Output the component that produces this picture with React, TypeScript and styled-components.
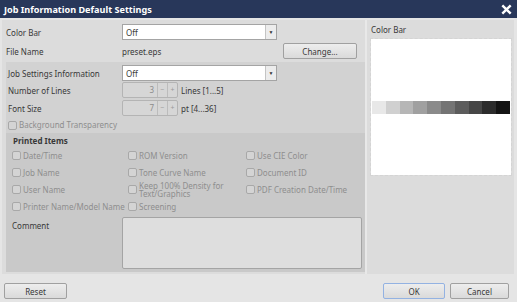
import React from 'react'
import styled, { createGlobalStyle } from 'styled-components'

const GlobalStyle = createGlobalStyle`
  html, body { margin: 0; padding: 0; }
  body {
    font-family: "Noto Sans", "Open Sans", sans-serif;
    font-size: 8px;
    color: #383838;
    background: #e5e5e5;
  }
`

const Window = styled.div`
  width: 517px;
  height: 302px;
  display: flex;
  flex-direction: column;
  background: #e5e5e5;
  overflow: hidden;
`

const TitleBar = styled.div`
  height: 18px;
  flex: none;
  background: #28375a;
  color: #fff;
  display: flex;
  align-items: center;
  justify-content: space-between;
  padding: 0 5px 0 4px;
  font-weight: bold;
  font-size: 9.1px;
`

const Body = styled.div`
  height: 258px;
  flex: none;
  box-sizing: border-box;
  display: flex;
  padding: 2px 3px 2px 2px;
`

const LeftPane = styled.div`
  width: 363px;
  flex: none;
  display: flex;
  flex-direction: column;
  background: #dcdcdc;
`

const RightPane = styled.div`
  flex: 1;
  background: #dcdcdc;
  border-left: 2px solid #e8e8e8;
  padding: 3px 2px 0 3px;
  display: flex;
  flex-direction: column;
`

const PaneLabel = styled.div`
  height: 13px;
  line-height: 13px;
  padding-left: 1px;
`

const TopBlock = styled.div`
  padding: 4px 0 3px 4px;
  display: flex;
  flex-direction: column;
  gap: 3px;
`

const Row = styled.div<{ $h?: number }>`
  display: flex;
  align-items: center;
  height: ${p => p.$h ?? 16}px;
`

const Label = styled.div<{ $w: number }>`
  width: ${p => p.$w}px;
  flex: none;
`

const Select = styled.div`
  width: 155px;
  height: 16px;
  box-sizing: border-box;
  border: 1px solid #a4a4a4;
  background: #fff;
  display: flex;
  align-items: stretch;
  padding-left: 3px;
  span { flex: 1; display: flex; align-items: center; }
`

const Arrow = styled.div`
  width: 10px;
  border-left: 1px solid #c4c4c4;
  background: #ececec;
  display: flex;
  align-items: center;
  justify-content: center;
  font-size: 5px;
  color: #333;
`

const FileName = styled.span`
  width: 161px;
  flex: none;
`

const Button = styled.div<{ $w: number; $focus?: boolean }>`
  width: ${p => p.$w}px;
  height: 16px;
  box-sizing: border-box;
  border: 1px solid ${p => (p.$focus ? '#93b2e2' : '#a0a0a0')};
  border-radius: 2px;
  background: linear-gradient(#ededed, #dadada);
  display: flex;
  align-items: center;
  justify-content: center;
  color: #383838;
`

const JobBlock = styled.div`
  flex: 1;
  margin: 0 0 2px 4px;
  background: #d2d2d2;
  display: flex;
  flex-direction: column;
  padding-top: 3px;
`

const JobRows = styled.div`
  padding-left: 2px;
  display: flex;
  flex-direction: column;
`

const Spinner = styled.div`
  display: flex;
  height: 16px;
  width: 56px;
  box-sizing: border-box;
  border: 1px solid #b4b4b4;
  border-radius: 2px;
  background: #d6d6d6;
  margin-right: 3px;
`

const SpinValue = styled.div`
  flex: 1;
  text-align: right;
  padding-right: 3px;
  color: #8c8c8c;
  line-height: 14px;
`

const SpinBtn = styled.div`
  width: 9px;
  border-left: 1px solid #bcbcbc;
  color: #9a9a9a;
  text-align: center;
  line-height: 14px;
  font-size: 7px;
`

const Check = styled.div`
  display: flex;
  align-items: center;
  gap: 2px;
  color: #8e8e8e;
  line-height: 8px;
  white-space: pre;
`

const Box = styled.div`
  width: 7px;
  height: 7px;
  flex: none;
  border: 1px solid #a8a8a8;
  border-radius: 2px;
  background: #d4d4d4;
`

const PrintedBlock = styled.div`
  flex: 1;
  background: #c9c9c9;
  display: flex;
  flex-direction: column;
  padding-top: 1px;
`

const Heading = styled.div`
  font-weight: bold;
  height: 13px;
  line-height: 13px;
  padding-left: 7px;
`

const Grid = styled.div`
  display: grid;
  grid-template-columns: 116px 118px 1fr;
  grid-auto-rows: 17px;
  align-items: center;
  padding-left: 6px;
`

const CommentRow = styled.div`
  display: flex;
  margin-top: 2px;
`

const CommentLabel = styled.div`
  width: 110px;
  flex: none;
  padding: 3px 0 0 6px;
`

const TextArea = styled.div`
  width: 240px;
  height: 52px;
  box-sizing: border-box;
  border: 1px solid #a4a4a4;
  border-radius: 2px;
  background: #dedede;
`

const PreviewBox = styled.div`
  margin-top: 2px;
  height: 138px;
  box-sizing: border-box;
  background: #fff;
  background-clip: padding-box;
  border: 1px dashed #d4d4d4;
  display: flex;
  flex-direction: column;
  justify-content: center;
  padding: 0 1px;
`

const Strip = styled.div`
  display: flex;
  height: 13px;
`

const Patch = styled.div<{ $c: string }>`
  flex: 1;
  background: ${p => p.$c};
`

const Footer = styled.div`
  flex: 1;
  display: flex;
  align-items: flex-start;
  justify-content: space-between;
  padding: 7px 8px 0 4px;
`

const FooterRight = styled.div`
  display: flex;
  gap: 5px;
`

const patches = ['#e8e8e8', '#d0d0d0', '#b6b6b6', '#a0a0a0', '#8a8a8a', '#747474', '#5c5c5c', '#464646', '#2c2c2c', '#141414']

const items = [
  'Date/Time', 'ROM Version', 'Use CIE Color',
  'Job Name', 'Tone Curve Name', 'Document ID',
  'User Name', 'Keep 100% Density for\nText/Graphics', 'PDF Creation Date/Time',
  'Printer Name/Model Name', 'Screening', '',
]

function Checkbox({ label }: { label: string }) {
  if (!label) return <div />
  return (
    <Check>
      <Box />
      <span>{label}</span>
    </Check>
  )
}

function Spin({ value, unit }: { value: number; unit: string }) {
  return (
    <>
      <Spinner>
        <SpinValue>{value}</SpinValue>
        <SpinBtn>−</SpinBtn>
        <SpinBtn>+</SpinBtn>
      </Spinner>
      <span>{unit}</span>
    </>
  )
}

export default function App() {
  return (
    <Window>
      <GlobalStyle />
      <TitleBar>
        <span>Job Information Default Settings</span>
        <svg width="11" height="11" viewBox="0 0 11 11">
          <path d="M1.3 1.3 L9.7 9.7 M9.7 1.3 L1.3 9.7" stroke="#fff" strokeWidth="2.4" />
        </svg>
      </TitleBar>
      <Body>
        <LeftPane>
          <TopBlock>
            <Row>
              <Label $w={116}>Color Bar</Label>
              <Select><span>Off</span><Arrow>▼</Arrow></Select>
            </Row>
            <Row>
              <Label $w={116}>File Name</Label>
              <FileName>preset.eps</FileName>
              <Button $w={74}>Change...</Button>
            </Row>
          </TopBlock>
          <JobBlock>
            <JobRows>
              <Row>
                <Label $w={114}>Job Settings Information</Label>
                <Select><span>Off</span><Arrow>▼</Arrow></Select>
              </Row>
              <Row $h={18}>
                <Label $w={114}>Number of Lines</Label>
                <Spin value={3} unit="Lines [1...5]" />
              </Row>
              <Row $h={18}>
                <Label $w={114}>Font Size</Label>
                <Spin value={7} unit="pt [4...36]" />
              </Row>
              <Row $h={16}>
                <Checkbox label="Background Transparency" />
              </Row>
            </JobRows>
            <PrintedBlock>
              <Heading>Printed Items</Heading>
              <Grid>
                {items.map((it, i) => (
                  <Checkbox key={i} label={it} />
                ))}
              </Grid>
              <CommentRow>
                <CommentLabel>Comment</CommentLabel>
                <TextArea />
              </CommentRow>
            </PrintedBlock>
          </JobBlock>
        </LeftPane>
        <RightPane>
          <PaneLabel>Color Bar</PaneLabel>
          <PreviewBox>
            <Strip>
              {patches.map(c => (
                <Patch key={c} $c={c} />
              ))}
            </Strip>
          </PreviewBox>
        </RightPane>
      </Body>
      <Footer>
        <Button $w={63}>Reset</Button>
        <FooterRight>
          <Button $w={62} $focus>OK</Button>
          <Button $w={59}>Cancel</Button>
        </FooterRight>
      </Footer>
    </Window>
  )
}
